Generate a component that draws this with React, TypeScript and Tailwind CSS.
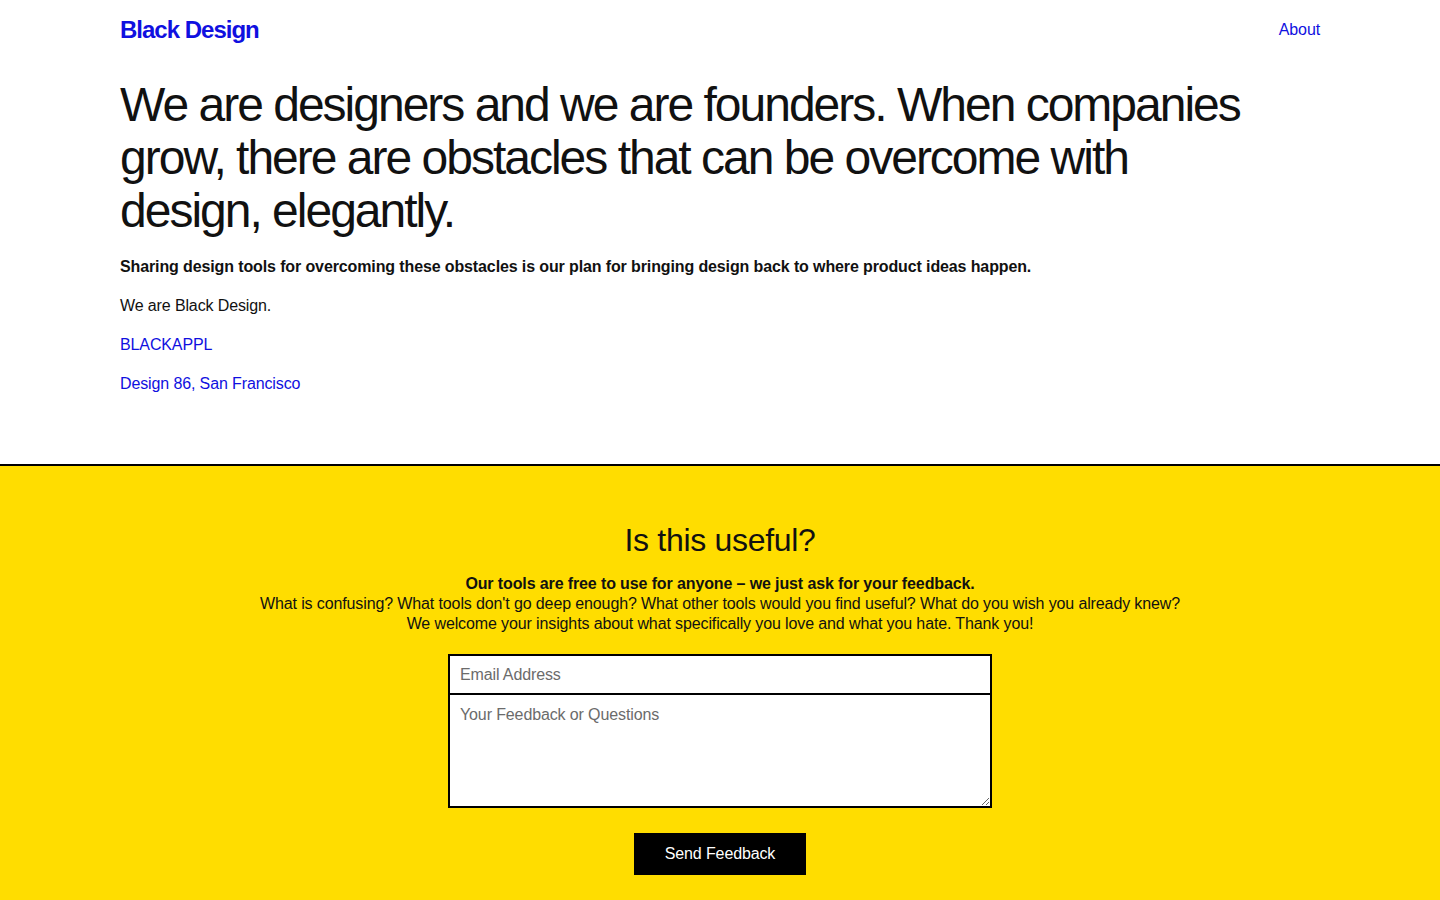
export default function App() {
  return (
    <div className="min-h-screen flex flex-col bg-white font-['Liberation_Sans',Arial,sans-serif] text-[#111] tracking-[-0.12px]">
      <div className="px-[120px]">
        <header className="flex items-center justify-between h-[60px]">
          <a href="#" className="text-[24px] font-bold tracking-[-1px] text-[#1010e0]">
            Black Design
          </a>
          <a href="#" className="text-base text-[#1010e0]">
            About
          </a>
        </header>

        <section className="pt-[18px] pb-[69px]">
          <h1 className="text-[48px] leading-[53px] tracking-[-2px] text-[#111] max-w-[1140px]">
            We are designers and we are founders. When companies grow, there are obstacles that can be
            overcome with design, elegantly.
          </h1>
          <p className="mt-[18px] text-base font-bold leading-[23px]">
            Sharing design tools for overcoming these obstacles is our plan for bringing design back to
            where product ideas happen.
          </p>
          <p className="mt-[16px] text-base leading-[23px]">We are Black Design.</p>
          <p className="mt-[16px] text-base leading-[23px]">
            <a href="#" className="text-[#1010e0]">BLACKAPPL</a>
          </p>
          <p className="mt-[16px] text-base leading-[23px]">
            <a href="#" className="text-[#1010e0]">Design 86, San Francisco</a>
          </p>
        </section>
      </div>

      <section className="flex-1 border-t-2 border-black bg-[#ffdd00] pt-[54px] pb-[25px] flex flex-col items-center text-center">
        <h2 className="text-[32px] leading-[40px] tracking-[-0.3px] text-[#111]">Is this useful?</h2>
        <div className="mt-[14px] text-base leading-[20px] text-[#111]">
          <p className="font-bold">Our tools are free to use for anyone – we just ask for your feedback.</p>
          <p>
            What is confusing? What tools don't go deep enough? What other tools would you find useful? What
            do you wish you already knew?
          </p>
          <p>We welcome your insights about what specifically you love and what you hate. Thank you!</p>
        </div>
        <form className="mt-[20px] w-[544px] flex flex-col items-center" onSubmit={(e) => e.preventDefault()}>
          <input
            type="email"
            placeholder="Email Address"
            className="w-full h-[41px] border-2 border-black bg-white px-[10px] text-base text-[#111] placeholder:text-[#6b6b6b] outline-none"
          />
          <textarea
            placeholder="Your Feedback or Questions"
            className="w-full h-[115px] -mt-[2px] border-2 border-black bg-white px-[10px] py-[8px] text-base text-[#111] placeholder:text-[#6b6b6b] outline-none"
          />
          <button
            type="submit"
            className="mt-[25px] w-[172px] h-[42px] bg-black text-white text-base"
          >
            Send Feedback
          </button>
        </form>
      </section>
    </div>
  );
}
